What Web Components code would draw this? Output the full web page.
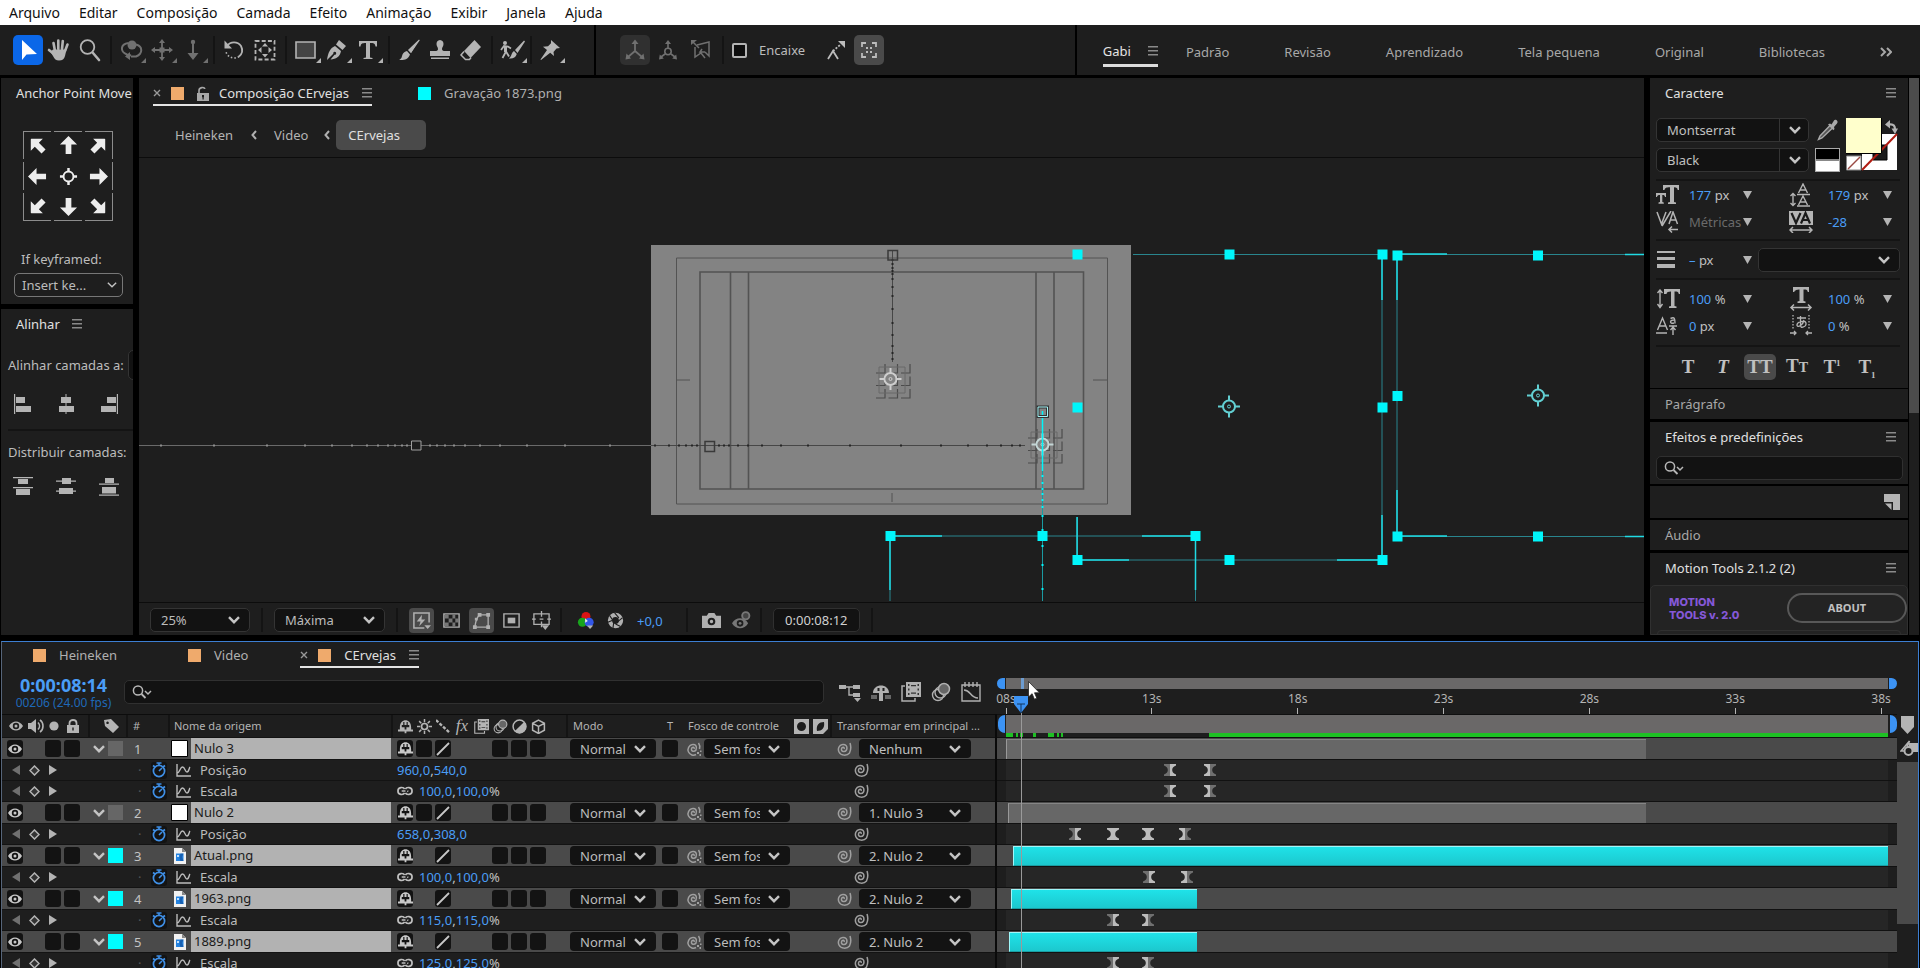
<!DOCTYPE html>
<html lang="pt-BR">
<head>
<meta charset="utf-8">
<title>CErvejas</title>
<style>
  html, body { margin: 0; height: 100%; background: #000; overflow: hidden; }
  body { font: 13px/18px "Noto Sans", "Open Sans", sans-serif; color: #bcbcbc; }
</style>
</head>
<body>
<app-shell></app-shell>
<script>
const BASE = `
  *, *::before, *::after { box-sizing: border-box; }
  :host { display: block; }
  svg { display: block; flex: none; }
  button, select, input { font: inherit; color: inherit; margin: 0; padding: 0; border: 0; background: none; outline: none; }
  a { color: inherit; text-decoration: none; }
`;

const define = (tag, css, html) => customElements.define(tag, class extends HTMLElement {
  connectedCallback() {
    if (this.shadowRoot) return;
    const t = document.createElement('template');
    t.innerHTML = `<style>${BASE}${css}</style>${typeof html === 'function' ? html(this) : html}`;
    this.attachShadow({ mode: 'open' }).append(t.content.cloneNode(true));
  }
});

/* ---------- icons: [viewBox, markup] ---------- */
const F = 'fill="currentColor"';
const S = (w = 1.5) => `fill="none" stroke="currentColor" stroke-width="${w}"`;
const CORNER = `<path ${F} d="M30 23v5h-5z"/>`;
const ICONS = {
  menu: ['0 0 10 10', `<path ${F} d="M0 0h10v1.5H0zM0 4h10v1.5H0zM0 8h10v1.5H0z"/>`],
  chevron: ['0 0 12 8', `<path ${S(2.4)} d="M1 1.2l5 5 5-5"/>`],
  thin: ['0 0 12 8', `<path ${S(1.6)} d="M1 1.2l5 5 5-5"/>`],
  back: ['0 0 6 10', `<path ${S(2)} d="M5 1L1.5 5 5 9"/>`],
  more: ['0 0 12 10', `<path ${S(2)} d="M1 1l4 4-4 4M7 1l4 4-4 4"/>`],
  close: ['0 0 8 8', `<path ${S(1.4)} d="M1 1l6 6M7 1L1 7"/>`],
  lock: ['0 0 12 15', `<path ${S(1.6)} d="M2 7V4.500C2 1 7.500.8 7.800 3"/><path ${F} fill-rule="evenodd" d="M0 7h12v8H0zM5 9v2l.5.6V13.500h1.200v-1.900L7 11V9z"/>`],
  search: ['0 0 20 14', `<circle ${S()} cx="6" cy="5.500" r="4.600"/><path ${S(1.8)} d="M9.500 9l4 4"/><path ${S()} d="M13 6l3 3 3-3"/>`],
  tri: ['0 0 9 8', `<path ${F} d="M0 0h9L4.500 8z"/>`],
  arrowSel: ['0 0 30 30', `<path fill="#fff" d="M9 5v20l4.500-5.500L24 19z"/>`],
  hand: ['0 0 30 30', `<g ${S(2.6)} stroke-linecap="round"><path d="M11 16L9.500 8M14.300 14V5.500M18 14l.8-8M21 16l2.500-6.500M10 19l-5-4"/></g><path ${F} d="M9 14.500h13.500L21 21c-.8 3-2.500 4.500-6 4.500-3 0-4.500-1.500-6-4.500L6.500 17z"/>`],
  zoom: ['0 0 30 30', `<circle ${S(1.8)} cx="12.500" cy="12" r="6.800"/><path ${S(2.6)} stroke-linecap="round" d="M18 18l6 7"/>`],
  orbit: ['0 0 30 30', `<circle ${F} cx="16" cy="10" r="4.500"/><path ${S(2)} d="M12.500 8C4 9 4 17 11 19.500l4 1M20 9.500c7 2 7 9 0 12h-5"/><path ${F} d="M14 17v8l-5-3.500zM30 23v5h-5z"/>`],
  pan: ['0 0 30 30', `<path ${S(1.8)} d="M15 7v16M7 15h16"/><path ${F} d="M15 4l3 4h-6zM15 26l3-4h-6zM4 15l4-3v6zM26 15l-4-3v6zM30 23v5h-5z"/><path ${F} d="M12.500 12.500h5v5h-5z"/>`],
  dolly: ['0 0 30 30', `<path ${S(2)} d="M15 7v12"/><circle ${F} cx="15" cy="7" r="2.200"/><path ${F} d="M9.500 18h11L15 25zM30 23v5h-5z"/>`],
  rotate: ['0 0 30 30', `<path ${S(1.8)} d="M8 11a8.500 8.500 0 0 1 14 0c2 4 1 8-2 10.500"/><path ${S(1.6)} stroke-dasharray="1.500 2" d="M20 21.500A8.500 8.500 0 0 1 7 17"/><path ${F} d="M5.500 5.500V13.500H13z"/>`],
  anchor: ['0 0 30 30', `<path ${S(1.8)} stroke-dasharray="4 2.200" d="M5.500 6h19v18.500h-19z"/><path ${F} d="M15 8l3 3.500h-6zM15 22.500l3-3.500h-6zM8 15l3.500-3v6zM22 15l-3.500-3v6z"/>`],
  rect: ['0 0 30 30', `<path fill="#444" stroke="currentColor" stroke-width="1.600" d="M5 7h19v16H5z"/>${CORNER}`],
  pen: ['0 0 30 30', `<path ${F} fill-rule="evenodd" d="M5 25c1-7 3-12 8-14l6 5c-1 6-5 8-10.500 8.500l4-4.800a1.500 1.500 0 1 0-1.200-1zM14 9.500l3-4.500 7 6-3.500 4z"/>${CORNER}`],
  type: ['0 0 30 30', `<path ${F} d="M6 6h18v5.500h-1.500C22 8.500 21 8 17 8v14.500l2.500.6V24h-9v-.9l2.500-.6V8c-4 0-5 .5-5.500 3.500H6z"/>${CORNER}`],
  brush: ['0 0 30 30', `<path ${F} d="M25 5L14.500 15l2.500 3zM13 16l3 3.500c-2 5-6 6-11 5.500 3-1.500 2.500-3 3.500-5.500.8-2 2.500-3 4.500-3.500z"/><path ${F} d="M25 4.500l.8.8L17 18l-3-3z"/>`],
  stamp: ['0 0 30 30', `<path ${F} d="M15 5a4 4 0 0 1 3.500 4c0 2.500-1.500 3-1.500 5 0 1.500 1 2 3 2h5v5H5v-5h5c2 0 3-.5 3-2 0-2-1.500-2.500-1.500-5A4 4 0 0 1 15 5zM6 22.500h18V24H6z"/>`],
  eraser: ['0 0 30 30', `<path ${F} d="M18.500 5L25 12 14.500 23 8 16z"/><path ${S()} d="M8 16.500L5 20l4.500 4.500h4L15 22.500"/>`],
  puppetBrush: ['0 0 30 30', `<circle ${F} cx="8" cy="8" r="2"/><path ${S(1.800)} d="M4 15l3-4 4 .5 3 2M9 11.500v5L5.500 23M9 16.500l3 5"/><path ${F} d="M10 11H7v6h3zM27 5.500l1 1L20.500 18l-2.500-3zM17 16l2.800 3c-1.500 4-4 5-8 4.500 3-2 2.500-6 5.200-7.500z"/>${CORNER}`],
  pin: ['0 0 30 30', `<path ${F} d="M16 5l9 8-3.500.5-3 3.500.5 4-3.800-3.200L6 25l-.5-.5 6.500-9.500L8 11.800l5-.5 3-3z"/>${CORNER}`],
  axis1: ['0 0 30 30', `<path ${S(1.800)} d="M15 8v8l-7 6M15 16l7 6"/><path ${F} d="M15 4.500l3.500 4.500h-7zM5.500 24.500l1-6 4.500 5zM24.500 24.500l-1-6-4.500 5z"/>`],
  axis2: ['0 0 30 30', `<path ${S(1.600)} d="M15 8v5M12 19l-4 3M18 19l4 3"/><circle ${S(1.600)} cx="15" cy="16.500" r="3.200"/><path ${F} d="M15 5l3 4h-6zM6 24.500l.8-5 4 4zM24 24.500l-.8-5-4 4z"/>`],
  axis3: ['0 0 30 30', `<path ${S(1.500)} d="M11 10l12-3v14l-4-4M9 12v10l6-4 4 5M19 17h-5l2-3"/><path ${F} d="M5 5h6l-6 5z"/><path ${S()} d="M7 7l6 6"/>`],
  snap1: ['0 0 30 30', `<path ${S(1.800)} d="M7 24l5-8 5 8"/><path ${S(1.800)} stroke-dasharray="2 1.500" d="M12 16l7-6"/><path ${F} d="M17 6h7v7z"/>`],
  snap2: ['0 0 30 30', `<path ${S(1.800)} d="M8 12V8h4M18 8h4v4M22 18v4h-4M12 22H8v-4"/><path ${F} d="M12 12h2v2h-2zM16 12h2v2h-2zM12 16h2v2h-2zM16 16h2v2h-2z"/>`],
  arrow: ['0 0 20 20', `<path fill="#ededed" d="M10 0l9 9h-6v10H7V9H1z"/>`],
  target: ['0 0 20 20', `<circle fill="none" stroke="#ededed" stroke-width="2" cx="10" cy="10" r="5.200"/><path stroke="#ededed" stroke-width="2.600" d="M10 1v4M10 15v4M1 10h4M15 10h4"/>`],
  alL: ['0 0 20 20', `<path ${F} d="M1 0h1.200v20H1zM3 3h9v6H3zM3 12h15v6H3z"/>`],
  alC: ['0 0 20 20', `<path ${F} d="M9.500 0h1v20h-1zM5 3h10v6H5zM3 12h15v6H3z"/>`],
  alR: ['0 0 20 20', `<path ${F} d="M17.800 0H19v20h-1.200zM8 3h9v6H8zM2 12h15v6H2z"/>`],
  diT: ['0 0 20 20', `<path ${F} d="M0 1h20v1.200H0zM5 3h10v5H5zM0 11h20v1.200H0zM3 13h14v6H3z"/>`],
  diC: ['0 0 20 20', `<path ${F} d="M0 4.500h20v1.200H0zM6 2h9v6H6zM0 14.500h20v1.200H0zM3 12h14v6H3z"/>`],
  diB: ['0 0 20 20', `<path ${F} d="M0 7.500h20v1.200H0zM6 2h9v5H6zM0 18.500h20v1.200H0zM3 11h14v6.500H3z"/>`],
  fast: ['0 0 20 20', `<path ${S(1.600)} d="M18 12V2H2v16h11"/><path ${F} d="M10.500 4L5 11h4l-1.500 5L14 9h-4zM13 15h7l-3.500 4z"/>`],
  checker: ['0 0 20 20', `<path ${S(1.500)} d="M2 3h16v14H2z"/><path ${F} d="M3 4h4v4H3zM11 4h3v4h-3zM7 8h4v4H7zM14 8h3v4h-3zM3 12h4v4H3zM11 12h3v4h-3z" opacity=".6"/>`],
  mask: ['0 0 20 20', `<path ${S(1.400)} d="M3 17C4 11 4 8 8 4h9v13z"/><path ${F} d="M1 15h4v4H1zM15 15h4v4h-4zM15 2h4v4h-4zM6 2h4v4H6zM3 7h3v3H3z"/>`],
  region: ['0 0 20 20', `<path ${S(1.500)} d="M2 3h16v14H2z"/><path ${F} d="M6 7h8v6H6z"/>`],
  guides: ['0 0 20 20', `<path ${S(1.400)} d="M2 3h16v11H2zM10 0v6M10 11v6M0 8.500h4M16 8.500h4M8 8.500h4"/><path ${F} d="M10 15h8l-4 5z"/>`],
  rgb: ['0 0 20 20', `<circle cx="10" cy="6" r="5" fill="#d91414"/><circle cx="6" cy="12.500" r="5" fill="#18a51d"/><circle cx="13.500" cy="12.500" r="5" fill="#3256e8"/><path fill="#e9e9e9" d="M9 8l3 3-3 2z"/><path ${F} d="M11 16h7l-3.500 4z"/>`],
  aperture: ['0 0 20 20', `<circle ${S(5)} cx="10" cy="10" r="6.500"/><path stroke="#1e1e1e" stroke-width="1.300" d="M9 1l5 6M18 7l-6 5M16 17l-6-3M7 19l1-7M1 12l7-3M3 4l4 6"/>`],
  camera: ['0 0 20 20', `<path ${F} fill-rule="evenodd" d="M0 5h5l2-3h6l2 3h5v13H0zM10 7a4 4 0 1 0 0 8 4 4 0 0 0 0-8zm0 2.200a1.800 1.800 0 1 1 0 3.600 1.800 1.800 0 0 1 0-3.600z"/>`],
  snapEye: ['0 0 20 20', `<path ${F} fill-rule="evenodd" d="M0 13c4-7 13-7 17 0-4 7-13 7-17 0zm8.500-3.500a3.500 3.500 0 1 0 0 7 3.500 3.500 0 0 0 0-7z"/><circle ${F} cx="8.500" cy="13" r="1.500"/><circle fill="#444" stroke="currentColor" stroke-width="2" cx="14.500" cy="5" r="3.800"/>`],
  dropper: ['0 0 22 22', `<path fill="#555" stroke="currentColor" stroke-width="1.400" d="M13 6.500L3 17l-1.500 3.500L5 19 15.500 9z"/><path ${F} d="M11 5.500l2-1 1.500 1L17 1.500c1.500-2 5 1 3 3L17 8l.5 2-1.200 1.200z"/>`],
  swap: ['0 0 13 14', `<path ${S(2.200)} d="M4 4.500c5-1 6 2 6 5"/><path ${F} d="M0 4.500L5 0v8.500zM6.500 8.500h6.500L10 14z"/>`],
  note: ['0 0 16 16', `<path ${F} fill-rule="evenodd" d="M0 0h16v16H9V8H0z"/><path ${F} d="M1 9.500h6.500V16z"/>`],
  flow: ['0 0 22 20', `<path ${F} d="M0 3h7v4H0zM14 3h7v4h-7zM14 11h7v4h-7zM15 16h7l-3.500 4z"/><path ${S(1.400)} d="M6 5h9M10 5v8h5"/>`],
  shy: ['0 0 20 20', `<path ${F} fill-rule="evenodd" d="M2.500 11C2.500-1.500 17.500-1.500 17.500 11v3H20v2.500h-8.800V19H8.800v-2.500H0V14h2.500zM7 4v4H5v3h3.800v3h2.400v-3H15V8h-2V4h-1.600v4H8.600V4z"/>`],
  shyBig: ['0 0 20 20', `<path ${F} d="M2 11c0-10 16-10 16 0h-6v8H8v-8z"/><path fill="#1e1e1e" d="M6.500 6h2v3h-2zM11.500 6h2v3h-2z"/><path ${F} opacity=".5" d="M0 13h6v4H0zM14 13h6v4h-6z"/>`],
  frames: ['0 0 20 20', `<path ${S(1.500)} d="M4 4H1v15h13v-3"/><path ${F} d="M5 0h15v15H5z"/><path fill="#333" d="M7 2h1.500v2H7zM7 6.500h1.500v2H7zM7 11h1.500v2H7zM16.500 2H18v2h-1.500zM16.500 6.500H18v2h-1.500zM16.500 11H18v2h-1.500zM10 3h5v1.200h-5zM10 10.500h5v1.200h-5z"/>`],
  blur: ['0 0 20 20', `<circle ${S(1.400)} cx="7" cy="13" r="5.500"/><circle ${S(1.400)} cx="9.500" cy="10.500" r="5.500"/><circle cx="13" cy="7" r="5.500" fill="#666" stroke="currentColor" stroke-width="1.500"/>`],
  graph: ['0 0 20 20', `<path ${S(1.400)} d="M1 3h18v16H1zM4 0v5M8 0v5M12 0v5M16 0v5"/><path ${S(1.500)} d="M3 8c7 0 6 8 14 8"/>`],
  eye: ['0 0 14 12', `<path ${F} fill-rule="evenodd" d="M0 6c3.500-6 10.500-6 14 0-3.500 6-10.500 6-14 0zm7-3.200a3.200 3.200 0 1 0 0 6.400 3.200 3.200 0 0 0 0-6.400z"/><circle ${F} cx="7" cy="6" r="1.500"/>`],
  sound: ['0 0 16 14', `<path ${F} d="M0 4h3l5-4v14l-5-4H0z"/><path ${S(1.600)} d="M10 3.500c2 2 2 5 0 7M12 .8c4 3 4 9.500 0 12.400"/>`],
  dot: ['0 0 10 10', `<circle ${F} cx="5" cy="5" r="4.600"/>`],
  locked: ['0 0 12 14', `<path ${S(1.800)} d="M2.500 7V4c0-4 7-4 7 0v3"/><path ${F} fill-rule="evenodd" d="M0 6h12v8H0zM5.300 8.500v3h1.400v-3z"/>`],
  tag: ['0 0 16 14', `<path ${F} fill-rule="evenodd" d="M1 1l7-1 8 8-6 6-8-7zm3.500 1.500a1.300 1.300 0 1 0 .1 0z"/>`],
  sun: ['0 0 14 14', `<circle ${S(1.600)} cx="7" cy="7" r="2.800"/><path ${S(1.400)} d="M7 0v3M7 11v3M0 7h3M11 7h3M2 2l2 2M10 10l2 2M12 2l-2 2M4 10l-2 2"/>`],
  dashes: ['0 0 14 14', `<path ${S(2.200)} stroke-dasharray="3 1.500" d="M0 1l13 12"/>`],
  slash: ['0 0 14 14', `<path ${S(1.800)} d="M1 13L13 1"/>`],
  half: ['0 0 14 14', `<circle ${S(1.400)} cx="7" cy="7" r="6"/><path ${F} d="M11.500 2.500A6.200 6.200 0 0 1 2.500 11.500z"/>`],
  cube: ['0 0 14 14', `<path ${S(1.400)} d="M7 1l5.500 3v6.500L7 13.500l-5.500-3V4zM1.500 4L7 7l5.500-3M7 7v6"/>`],
  matte1: ['0 0 15 15', `<path ${F} fill-rule="evenodd" d="M0 0h15v15H0zM7.500 3a4.500 4.500 0 1 0 0 9 4.500 4.500 0 0 0 0-9z"/>`],
  matte2: ['0 0 15 15', `<path ${F} fill-rule="evenodd" d="M0 0h15v10L10 15H0zM11 3C6 3 3 6 4 12c5 0 8-3 7-9z"/><path ${F} d="M4 12l6-7"/>`],
  spiral: ['0 0 16 16', `<path ${S(1.500)} d="M8 8c1-2-2-2.500-2.500 0C5 11 9 11.500 10.500 9 12 5 9 3 6.500 3.500 3 4 1.500 8 3 11c2 4 8 4 10.500 1C15 9 15 5 14 2"/>`],
  spiralM: ['0 0 16 16', `<path ${S(1.500)} d="M8 8c1-2-2-2.500-2.500 0C5 10.500 8.500 11 10 9 11.500 5 9 3 6.500 3.500 3 4 1 8 2.500 11c1.500 3 5 4 7.500 2.500M12.500 2c1.500 2 1.500 4 1 6"/><path ${F} d="M11 11h2v2h-2zM13.500 13H15v2h-1.500zM14 9.500h1.500V11H14z"/>`],
  solid: ['0 0 17 17', `<path fill="#fff" stroke="#000" stroke-width="1" d="M.5.5h16v16H.5z"/>`],
  png: ['0 0 17 17', `<path fill="#f2f2f2" d="M3 1h8l4 4v12H3z"/><path fill="#888" d="M11 1l4 4h-4z"/><path fill="#2583e0" d="M5 6.500h7.500V14H5z"/><path fill="#0b3f85" d="M9.500 6.500h3L11 10l1.500 4H9.500l-1-3z" opacity=".5"/><path fill="#bfe0ff" d="M6 8h2v2H6z"/>`],
  prev: ['0 0 8 10', `<path ${F} d="M8 0v10L0 5z"/>`],
  next: ['0 0 8 10', `<path ${F} d="M0 0v10l8-5z"/>`],
  key: ['0 0 11 11', `<path fill="#333" stroke="currentColor" stroke-width="1.500" d="M5.500 1L10 5.500 5.500 10 1 5.500z"/>`],
  watch: ['0 0 16 16', `<circle fill="none" stroke="#3f8fe6" stroke-width="1.700" cx="8" cy="9" r="5.600"/><path fill="none" stroke="#3f8fe6" stroke-width="1.600" d="M8 9l3-3M5.500 1h5M8 1v2.500M2 3.500l2 1.500M14 3.500l-2 1.500"/>`],
  curve: ['0 0 15 13', `<path ${S(1.400)} d="M1 0v12h14M1 9c3 0 3-6 5.500-6S9 8 11 8s2-4 3-5"/>`],
  link: ['0 0 17 10', `<path ${S(1.800)} d="M8 3C7 .5 1 .5 1 5s6 4.500 7 2M9 7c1 2.500 7 2.500 7-2S10 .5 9 3M5 5h4M11 5l1 .5"/>`],
  bin: ['0 0 15 18', `<path ${F} d="M1 0h13v11l-6.500 7L1 11z"/>`],
  compBtn: ['0 0 18 18', `<path ${F} d="M9 4h9v9H9z"/><path ${S(1.600)} d="M9.500 2L1 12h6.500V7z"/><circle cx="8.500" cy="12" r="4" fill="#1e1e1e" stroke="currentColor" stroke-width="2"/>`],
};
const icon = (name, w, h = w) => `<svg width="${w}" height="${h}" viewBox="${ICONS[name][0]}" aria-hidden="true">${ICONS[name][1]}</svg>`;

/* ---------- shared controls ---------- */
define('ui-select', `
  :host { display: flex; position: relative; align-items: center; height: 24px; }
  select { appearance: none; width: 100%; height: 100%; padding: 0 30px 0 10px; background: #121212;
    border: 1px solid #343434; border-radius: 5px; line-height: 18px; text-overflow: clip; }
  svg { position: absolute; right: 10px; pointer-events: none; color: #c4c4c4; }
  :host([split]) select { padding-right: 36px; background: linear-gradient(90deg, #121212 calc(100% - 29px), #343434 0 calc(100% - 28px), #121212 0); }
  :host([split]) svg { right: 8px; }
  :host([row]) { height: 19px; }
  :host([row]) select { border: 0; background: #131313; border-radius: 4px; }
  :host([outlined]) select { background: #1e1e1e; border-color: #777; padding: 0 24px 0 7px; }
  :host([outlined]) svg { right: 6px; }
`, el => `<select aria-label="${el.getAttribute('label')}"><option>${el.getAttribute('value') || ''}</option></select>${icon(el.hasAttribute('outlined') ? 'thin' : 'chevron', el.hasAttribute('outlined') ? 10 : 12, 8)}`);

define('search-field', `
  :host { display: flex; position: relative; align-items: center; height: 24px; }
  input { width: 100%; height: 100%; padding: 0 8px 0 34px; background: #121212; border: 1px solid #303030; border-radius: 5px; }
  svg { position: absolute; left: 8px; color: #b8b8b8; }
`, el => `<input type="text" aria-label="${el.getAttribute('label')}">${icon('search', 20, 14)}`);

define('panel-title', `
  :host { display: flex; align-items: center; height: 32px; padding: 0 12px 2px 15px; color: #e0e0e0; white-space: nowrap; overflow: hidden; }
  :host([spread]) { justify-content: space-between; }
  h2 { margin: 0; font: inherit; }
  button { margin-left: 12px; color: #8a8a8a; }
  :host([dim]) { color: #a8a8a8; padding-bottom: 0; }
`, el => `<h2><slot></slot></h2>${el.hasAttribute('menu') ? `<button aria-label="Menu do painel">${icon('menu', 10)}</button>` : ''}`);

define('comp-tab', `
  :host { display: flex; align-items: center; height: 100%; color: #b0b0b0; }
  .tab { display: flex; align-items: center; height: 24px; border-bottom: 2px solid transparent; }
  :host([active]) .tab { border-color: #e4e4e4; color: #e0e0e0; }
  .close { margin-right: 10px; color: #999; }
  i { width: 13px; height: 13px; background: var(--swatch, #efaa6c); margin-right: 13px; flex: none; }
  .lock { margin-right: 10px; color: #a8a8a8; }
  .menu { margin-left: 13px; color: #8a8a8a; }
`, el => `<div class="tab">
  ${el.hasAttribute('active') ? `<button class="close" aria-label="Fechar">${icon('close', 8)}</button>` : ''}
  <i></i>${el.hasAttribute('lock') ? `<button class="lock" aria-label="Bloquear">${icon('lock', 12, 15)}</button>` : ''}
  <button><slot></slot></button>
  ${el.hasAttribute('active') ? `<button class="menu" aria-label="Menu">${icon('menu', 10)}</button>` : ''}</div>`);

/* ---------- menu bar and toolbar ---------- */
define('menu-bar', `
  :host { background: #fff; color: #111; height: 25px; }
  nav { display: flex; gap: 19px; padding-left: 9px; height: 25px; font-size: 14px; line-height: 25px; }
`, `<nav>${['Arquivo', 'Editar', 'Composição', 'Camada', 'Efeito', 'Animação', 'Exibir', 'Janela', 'Ajuda'].map(t => `<a href="#">${t}</a>`).join('')}</nav>`);

const TOOLS = ['arrowSel', 'hand', 'zoom', '|', '-orbit', '-pan', '-dolly', '|', 'rotate', 'anchor', '|', 'rect', 'pen', 'type', '|', 'brush', 'stamp', 'eraser', '|', 'puppetBrush', '|', 'pin'];
define('tool-bar', `
  :host { display: flex; height: 50px; background: #000; gap: 2px; margin-bottom: 3px; }
  div { display: flex; align-items: center; background: #1e1e1e; }
  .tools { gap: 1px; padding-left: 13px; flex: 0 0 594px; color: #b4b4b4; }
  .snap { flex: 1; padding-left: 24px; gap: 3px; }
  button.t { width: 30px; height: 30px; border-radius: 5px; color: inherit; }
  button.t svg { width: 30px; height: 30px; }
  .dim { color: #707070 !important; }
  .on { background: #0b67e8; }
  .lit { background: #4a4a4a; }
  .faint { background: #303030; }
  hr { width: 2px; height: 28px; margin: 0 3px; border: 0; background: #141414; }
  .tools hr { margin: 0 3px 0 4px; }
  .tools hr:last-of-type { margin: 0 2px; }
  label { display: flex; align-items: center; gap: 12px; margin: 0 13px 0 2px; }
  input { appearance: none; width: 15px; height: 15px; border: 2px solid #b4b4b4; border-radius: 2px; background: #0e0e0e; }
`, `<div class="tools">${TOOLS.map(t => t === '|' ? '<hr>' : `<button class="t ${t === 'arrowSel' ? 'on' : t[0] === '-' ? 'dim' : ''}" aria-label="${t.replace('-', '')}">${icon(t.replace('-', ''), 30)}</button>`).join('')}</div>
<div class="snap"><button class="t dim faint" aria-label="Eixo local">${icon('axis1', 30)}</button><button class="t dim" aria-label="Eixo do mundo">${icon('axis2', 30)}</button><button class="t dim" aria-label="Eixo da exibição">${icon('axis3', 30)}</button><hr>
<label><input type="checkbox">Encaixe</label><button class="t" aria-label="Encaixar bordas">${icon('snap1', 30)}</button><button class="t lit" aria-label="Encaixar pontos">${icon('snap2', 30)}</button></div>
<work-spaces></work-spaces>`);

define('work-spaces', `
  :host { display: block; background: #1e1e1e; padding: 0 28px 0 26px; }
  nav { display: flex; align-items: center; gap: 55px; height: 54px; color: #a8a8a8; }
  .cur { display: flex; align-items: center; gap: 17px; height: 30px; color: #e4e4e4; border-bottom: 3px solid #dcdcdc; margin-right: -27px; }
  .cur button { color: #8a8a8a; }
`, `<nav><span class="cur"><a href="#">Gabi</a><button aria-label="Menu">${icon('menu', 10)}</button></span>
${['Padrão', 'Revisão', 'Aprendizado', 'Tela pequena', 'Original', 'Bibliotecas'].map(t => `<a href="#">${t}</a>`).join('')}<button aria-label="Mais">${icon('more', 12, 10)}</button></nav>`);

/* ---------- left column ---------- */
const ARROWS = [-45, 0, 45, -90, null, 90, -135, 180, 135];
define('anchor-panel', `
  :host { background: #1e1e1e; height: 226px; overflow: hidden; }
  .grid { display: grid; grid-template-columns: repeat(3, 28px); gap: 3px; width: 91px; margin: 21px 0 0 22px; }
  .grid button { display: grid; place-items: center; height: 28px; border: 0 solid #8c8c8c; }
  .grid button:nth-child(-n+3) { border-top-width: 1px; }
  .grid button:nth-child(n+7) { border-bottom-width: 1px; }
  .grid button:nth-child(3n+1) { border-left-width: 1px; }
  .grid button:nth-child(3n) { border-right-width: 1px; }
  label { display: block; margin: 29px 0 5px 20px; }
  ui-select { margin: 0 10px 0 13px; }
`, `<panel-title>Anchor Point Move</panel-title>
<div class="grid">${ARROWS.map(a => a === null ? `<button aria-label="Centro">${icon('target', 19)}</button>` : `<button aria-label="Mover ${a}°"><span style="rotate:${a}deg">${icon('arrow', 19)}</span></button>`).join('')}</div>
<label>If keyframed:</label><ui-select outlined label="If keyframed" value="Insert ke..."></ui-select>`);

define('align-panel', `
  :host { background: #1e1e1e; overflow: hidden; flex: 1; }
  .to { display: flex; align-items: center; height: 30px; margin: 9px 0 14px 7px; white-space: nowrap; gap: 4px; }
  .to ui-select { flex: 0 0 90px; height: 30px; }
  .row { display: flex; gap: 23px; padding-left: 12px; color: #b4b4b4; }
  hr { border: 0; height: 2px; background: #141414; margin: 15px 0 12px 7px; }
  p { margin: 0 0 15px 7px; white-space: nowrap; }
`, `<panel-title menu>Alinhar</panel-title>
<div class="to"><span>Alinhar camadas a:</span><ui-select label="Alinhar camadas a" value=""></ui-select></div>
<div class="row">${['alL', 'alC', 'alR'].map(n => `<button aria-label="${n}">${icon(n, 20)}</button>`).join('')}</div><hr>
<p>Distribuir camadas:</p>
<div class="row">${['diT', 'diC', 'diB'].map(n => `<button aria-label="${n}">${icon(n, 20)}</button>`).join('')}</div>`);

/* ---------- composition viewer ---------- */
const C = '#00f6fb';
const sq = (x, y) => `<path fill="${C}" d="M${x - 5} ${y - 5}h10v10h-10z"/>`;
const dim = d => `<path d="${d}" fill="none" stroke="#29858e"/>`;
const lit = (d, w = 1.5) => `<path d="${d}" fill="none" stroke="#20dbe4" stroke-width="${w}"/>`;
const aim = (x, y, c) => `<g fill="none" stroke="${c}" stroke-width="2"><circle cx="${x}" cy="${y}" r="6"/><path d="M${x} ${y - 11}v5M${x} ${y + 6}v5M${x - 11} ${y}h5M${x + 6} ${y}h5"/><circle cx="${x}" cy="${y}" r="1.500" stroke-width="1"/></g>`;
const nul = (x, y) => { let d = ''; for (let i = 0; i < 3; i++) for (let j = 0; j < 3; j++) d += `M${x - 7 + i * 12.5} ${y - 16 + j * 12.5}v9h-9`; return `<path d="${d}" fill="none" stroke="#4c4c4c" stroke-width="1.200"/><path d="M${x - 13} ${y - 13}h26v26h-26z" fill="none" stroke="#686868"/>`; };
const dot = (x, y, c) => `<path fill="${c}" d="M${x - 1} ${y - 1}h2v2h-2z"/>`;
const hdots = (xs, y, c) => xs.map(x => dot(x, y, c)).join('');
const vdots = (x, ys, c) => ys.map(y => dot(x, y, c)).join('');
define('comp-view', `
  :host { display: grid; grid-template-rows: minmax(0, 1fr); flex: 1 1 0; min-height: 0; overflow: hidden; }
  svg { width: 100%; height: 100%; min-height: 0; }
`, `<svg viewBox="139 158 1505 444" preserveAspectRatio="xMidYMid slice" role="img" aria-label="Composição CErvejas">
<path fill="#838383" d="M651 245h480v270H651z"/>
<g fill="none" stroke="#535353"><path d="M676.500 258h431v246h-431zM676 380h14M1093 380h14M892 493v9"/><path stroke-width="1.600" d="M700 272h383.500v217H700zM730.500 272v217M748.500 272v217M1036 272v217M1054 272v217"/></g>
<path d="M139 445.500h512" stroke="#6a6a6a"/>
${hdots([161, 214, 267, 305, 332, 352, 367, 378, 388, 395, 402, 407, 430, 437, 445, 454, 465, 480, 500, 527, 565, 610], 445.5, '#8e8e8e')}
<path d="M651 445.500h374M892.500 250v112" stroke="#474747"/>
${hdots([655, 669, 679, 686, 692, 697, 719, 724, 729, 738, 748, 762, 781, 808, 850, 901, 941, 968, 987, 1001, 1012, 1020], 445.5, '#262626')}
${vdots(892.5, [260, 264, 268, 271, 274, 279, 287, 296, 309, 323, 335, 346, 353, 359], '#262626')}
<path d="M411.500 441h9.500v9h-9.500z" fill="#1e1e1e" stroke="#a0a0a0"/><path d="M705 441.500h9.500v10H705zM888 250.500h9.500v9.500H888z" fill="none" stroke="#3a3a3a" stroke-width="1.500"/>
${nul(892, 380)}${aim(890.500, 379, '#cecece')}${nul(1044, 445)}${aim(1042.500, 444.500, '#c4d6d6')}
${dim('M1133 254.500H1382V560H1077.500V517M1397 536.500V254.500H1644M1397 536.500H1644M890 601V536H1195.500V601')}
${lit('M1077 517v43h52M1382 300V254M1382 515v45h-45M1397 300v-46h50M1397 490v46h50M1625 254.500h19M1625 536.500h19M890 590v-54h52M1142 536h53.500v54')}
<path d="M1042.500 411v190" stroke="#1b9aa1"/><path d="M1042.500 411v60" stroke="${C}" stroke-width="1.500"/>
${vdots(1042.5, [476, 483, 489, 494, 500, 507, 516, 530, 546, 565, 589], C)}
<path d="M1038 407h9.500v9.500h-9.500z" fill="none" stroke="#333" stroke-width="3"/><path d="M1038 407h9.500v9.500h-9.500z" fill="none" stroke="#a5f4f6"/>
${[[1077.5, 254.5], [1077.5, 407.5], [890.5, 536], [1042.5, 536], [1195.5, 536], [1077.5, 560], [1229.5, 254.5], [1382.5, 254.5], [1397.5, 255.5], [1538, 255.5], [1382.5, 407.5], [1397.5, 396], [1382.5, 560], [1229.5, 560], [1397.5, 536.5], [1538, 536.5]].map(p => sq(...p)).join('')}
${aim(1229, 406.500, '#62cfd2')}${aim(1538, 395.500, '#62cfd2')}
</svg>`);

define('comp-panel', `
  :host { display: flex; flex-direction: column; background: #1e1e1e; min-width: 0; min-height: 0; }
  .tabs { display: flex; gap: 46px; height: 34px; padding: 0 14px 2px; align-items: center; }
  .crumbs { display: flex; align-items: center; height: 46px; padding: 0 36px; border-bottom: 1px solid #0c0c0c; flex: none; }
  .crumbs a { color: #b4b4b4; }
  .crumbs svg { margin: 0 17px 0 18px; color: #b0b0b0; }
  .crumbs svg.last { margin: 0 6px 0 16px; }
  .crumbs .cur { padding: 0 26px 0 12px; line-height: 30px; background: #4a4a4a; border-radius: 5px; color: #e0e0e0; }
  .foot { display: flex; align-items: center; height: 33px; border-top: 1px solid #0c0c0c; padding: 2px 0 0 11px; flex: none; }
  hr { width: 2px; height: 24px; border: 0; background: #141414; margin: 0 11px; }
  .b { display: grid; place-items: center; width: 25px; height: 25px; border-radius: 4px; margin-right: 5px; color: #b0b0b0; }
  .on { background: #4a4a4a; }
  .z { width: 100px; } .q { width: 111px; }
  .blue { color: #4a9df6; margin: 2px 12px 0 4px; }
  .time { width: 87px; height: 24px; line-height: 22px; background: #121212; border: 1px solid #303030; border-radius: 5px; color: #d0d0d0; }
  .tight { margin-left: 1px; }
`, `<div class="tabs"><comp-tab active lock>Composição CErvejas</comp-tab><comp-tab style="--swatch:#00fdff">Gravação 1873.png</comp-tab></div>
<nav class="crumbs"><a href="#">Heineken</a>${icon('back', 6, 10)}<a href="#">Video</a>${icon('back', 6, 10).replace('<svg', '<svg class="last"')}<a href="#" class="cur">CErvejas</a></nav>
<comp-view></comp-view>
<div class="foot"><ui-select class="z" label="Ampliação" value="25%"></ui-select><hr><ui-select class="q" label="Resolução" value="Máxima"></ui-select><hr>
${['fast', 'checker', 'mask', 'region', 'guides'].map((n, i) => `<button class="b ${i % 2 || i > 3 ? '' : 'on'}" aria-label="${n}">${icon(n, 19)}</button>`).join('')}<hr class="tight">
<button class="b" aria-label="Canais">${icon('rgb', 18)}</button><button class="b" aria-label="Exposição">${icon('aperture', 17)}</button><button class="blue">+0,0</button><hr>
<button class="b" aria-label="Instantâneo">${icon('camera', 19)}</button><button class="b" style="color:#777" aria-label="Mostrar instantâneo">${icon('snapEye', 19)}</button><hr class="tight">
<button class="time">0:00:08:12</button><hr></div>`);

/* ---------- right column ---------- */
const glyph = {
  size: `<svg width="24" height="22" viewBox="0 0 24 22"><g ${F}><path d="M7 1h16v5h-1.300c-.3-2-.8-2.800-3.700-2.800V18l2 .5V20h-8v-1.500l2-.5V3.200C10 3.200 9 4 8.500 6H7z"/><path d="M0 9h10v4H9c-.2-1.500-.7-2-2.700-2v7l1.500.4v1.400H2.500v-1.400L4 18v-7c-2 0-2.700.5-3 2H0z"/></g></svg>`,
  lead: `<svg width="24" height="24" viewBox="0 0 24 24"><g ${S(1.400)}><path d="M4 11v11M1.500 13L4 10.500 6.500 13M1.500 20L4 22.500 6.500 20M8 11.500h13M8 23h13M9.500 10L14 1l4.500 9M11 7h6M9.500 22l4.500-9 4.500 9M11 19h6"/></g></svg>`,
  kern: `<svg width="24" height="22" viewBox="0 0 24 22"><g ${S(1.500)}><path d="M1 1l4.500 12L10 1M6 15L15 0M13 13l4-12 4.500 12M14.500 9h6M13 18.500h9M16 15.500l-3 3 3 3"/></g></svg>`,
  track: `<svg width="24" height="22" viewBox="0 0 24 22"><path ${F} d="M0 0h24v14H0z"/><path fill="none" stroke="#1a1a1a" stroke-width="2.200" d="M2.500 2L7 12l4.500-10M12 12.500L16.500 2 21 12.500M14 9h5"/><path ${S(1.500)} d="M1 19h22M4 16l-3 3 3 3M20 16l3 3-3 3"/></svg>`,
  stroke: `<svg width="20" height="18" viewBox="0 0 20 18"><path ${F} d="M1 0h18v2H1zM1 6h18v3H1zM1 13h18v4H1z"/></svg>`,
  vscale: `<svg width="24" height="20" viewBox="0 0 24 20"><path ${S(1.400)} d="M4 1v17M1.500 4L4 1l2.500 3M1.500 15L4 18.500 6.500 15"/><path ${F} d="M8 0h16v5h-1.200c-.3-2-1-2.600-4.300-2.600V17l2 .4V19h-7.500v-1.600l2-.4V2.400c-2.800 0-4.200.6-4.500 2.600H8z"/></svg>`,
  hscale: `<svg width="24" height="24" viewBox="0 0 24 24"><path ${F} d="M4 0h16v5h-1.200c-.3-2-1-2.600-4.300-2.600V14l2 .4V16H8.500v-1.600l2-.4V2.400C8.500 2.400 5.500 3 5.200 5H4z"/><path ${S(1.500)} d="M2 20.500h20M5 17.500l-3 3 3 3M19 17.500l3 3-3 3"/></svg>`,
  base: `<svg width="24" height="20" viewBox="0 0 24 20"><g ${S(1.400)}><path d="M1.500 14L6.500 2l5 12M3 10h7M0 17h11M13 10h8M17 19v-7M14.500 14l2.500-3 2.500 3M14.500 2.500c4-2 4.500 0 4.500 5M19 4c-6-.5-5.500 4.500-1 3"/></g></svg>`,
  tsume: `<svg width="24" height="22" viewBox="-1 0 24 22"><g ${S(1.300)}><path stroke-dasharray="1.500 1.500" d="M3 0v14M19 0v14"/><path d="M7 3h9M10.500 1v9c0 2 1 3 3 2M14 5c-1 5-6 8-7 5.500C6.500 7 15 4.500 16 8c.5 3-2 4-3.500 4M0 18h6M4 16l2 2-2 2M22 18h-6M18 16l-2 2 2 2"/></g></svg>`,
};
define('character-panel', `
  :host { background: #1e1e1e; color: #c0c0c0; height: 310px; overflow: hidden; }
  .font { display: grid; grid-template-columns: 1fr 25px 52px; column-gap: 6px; padding: 8px 10px 7px 6px; }
  .fams { display: grid; gap: 6px; }
  .mini { display: grid; gap: 6px; justify-items: center; align-content: start; color: #aaa; }
  .bw { width: 25px; height: 24px; border: 1px solid #aaa; background: linear-gradient(#000 10px, #888 0 12px, #fff 0); }
  .row { display: grid; grid-template-columns: 33px 54px 46px 39px 55px 1fr; align-items: center; height: 27px; margin-left: 6px; white-space: nowrap; }
  .row button { text-align: left; }
  .row svg { color: #b4b4b4; }
  b { font-weight: 400; color: #4a9df6; }
  .off { color: #6a6a6a; }
  hr { border: 0; height: 2px; background: #141414; margin: 0 8px 0 6px; }
  .kern { margin-bottom: 4px; } .scale { margin-top: 5px; } .shift { margin-bottom: 6px; }
  .stroke { grid-template-columns: 33px 54px 15px 1fr; height: 37px; padding-right: 8px; }
  .styles { display: flex; align-items: center; gap: 3px; height: 40px; padding-left: 22px; font: bold 19px/24px "Liberation Serif", serif; }
  .styles button { width: 32px; height: 26px; border-radius: 5px; }
  .styles .on { background: #4a4a4a; margin: 0 2px; }
  .styles small { font-size: 14px; } .styles sup, .styles sub { font-size: 9px; line-height: 0; }
`, `<panel-title menu spread>Caractere</panel-title>
<div class="font"><div class="fams"><ui-select split label="Família de fontes" value="Montserrat"></ui-select><ui-select split label="Estilo da fonte" value="Black"></ui-select></div>
<div class="mini">${icon('dropper', 22, 24)}<button class="bw" aria-label="Preto e branco"></button></div>
<svg width="52" height="54" viewBox="0 0 52 54"><path fill="#fff" d="M16 16h35v36H16z"/><path fill="#1a1a1a" stroke="#000" d="M27 27h14v15H27z"/><path stroke="#b01c12" stroke-width="2" d="M51 16L16 52"/><path fill="#fff" stroke="#888" d="M.5 38h14.500v14H.5z"/><path stroke="#9a4a44" stroke-width="1.500" d="M2 51l12-12"/><path fill="#ffffcc" stroke="#000" d="M-.5-.5h36v36h-36z"/><g transform="translate(39 2)" color="#b4b4b4">${ICONS.swap[1]}</g></svg></div><hr>
<div class="row">${glyph.size}<button><b>177</b> px</button>${icon('tri', 9, 8)}${glyph.lead}<button><b>179</b> px</button>${icon('tri', 9, 8)}</div>
<div class="row kern">${glyph.kern}<button class="off">Métricas</button>${icon('tri', 9, 8)}${glyph.track}<button><b>-28</b></button>${icon('tri', 9, 8)}</div><hr>
<div class="row stroke">${glyph.stroke}<button><b>–</b> px</button>${icon('tri', 9, 8)}<ui-select label="Estilo do traçado"></ui-select></div><hr>
<div class="row scale">${glyph.vscale}<button><b>100</b> %</button>${icon('tri', 9, 8)}${glyph.hscale}<button><b>100</b> %</button>${icon('tri', 9, 8)}</div>
<div class="row shift">${glyph.base}<button><b>0</b> px</button>${icon('tri', 9, 8)}${glyph.tsume}<button><b>0</b> %</button>${icon('tri', 9, 8)}</div><hr>
<div class="styles"><button>T</button><button><em>T</em></button><button class="on">TT</button><button>T<small>T</small></button><button>T<sup>1</sup></button><button>T<sub>1</sub></button></div>`);

define('right-column', `
  :host { display: grid; grid-template-columns: 1fr 10px; grid-template-rows: minmax(0, 1fr); background: #1e1e1e; min-height: 0; }
  .col { display: flex; flex-direction: column; background: #000; min-width: 0; min-height: 0; padding-right: 1px; }
  .col > * { background: #1e1e1e; flex: none; }
  .bar { background: linear-gradient(#4c4c4c 335px, #1e1e1e 0); }
  .par { margin: 1px 0 3px; height: 30px; }
  .fx { padding-bottom: 4px; }
  .fx search-field { margin: 2px 5px 0 6px; }
  .note { display: flex; justify-content: flex-end; align-items: center; height: 32px; margin: 2px 0; padding-right: 8px; color: #b4b4b4; }
  .aud { height: 30px; margin-bottom: 3px; }
  .col .mt { flex: 1 1 0; display: flex; flex-direction: column; min-height: 0; overflow: hidden; }
  .mt panel-title { flex: none; }
  .box { flex: 1 1 0; min-height: 0; background: #232323; border: 1px solid #303030; border-radius: 5px 5px 0 0; overflow: hidden; }
  .in { display: flex; justify-content: space-between; padding: 7px 0 0 18px; }
  strong { padding-top: 3px; font: 800 11px/13px Inter, sans-serif; color: #8558d8; }
  .about { flex: 0 0 120px; height: 30px; border: 2px solid #585858; border-radius: 15px; color: #c0c0c0; font-size: 11px; font-weight: 700; }
  .next { height: 20px; margin: 7px 6px 0; border: 1px solid #303030; border-radius: 4px; }
`, `<div class="col"><character-panel></character-panel><panel-title dim class="par">Parágrafo</panel-title>
<section class="fx"><panel-title menu spread>Efeitos e predefinições</panel-title><search-field label="Procurar efeitos"></search-field></section>
<div class="note"><button aria-label="Nova pasta">${icon('note', 16)}</button></div>
<panel-title dim class="aud">Áudio</panel-title>
<section class="mt"><panel-title menu spread>Motion Tools 2.1.2 (2)</panel-title><div class="box"><div class="in"><strong>MOTION<br>TOOLS v. 2.0</strong><button class="about">ABOUT</button></div><div class="next"></div></div></section></div><div class="bar"></div>`);

/* ---------- timeline: layer outline ---------- */
const LAYERS = [
  { n: 1, name: 'Nulo 3', type: 'solid', tag: '#666', parent: 'Nenhum', fx: 1, bar: [1006, 1646, 'g'], props: [['Posição', ['960,0', '540,0'], 0, [1169, 1210]], ['Escala', ['100,0', '100,0'], 1, [1169, 1210]]] },
  { n: 2, name: 'Nulo 2', type: 'solid', tag: '#666', parent: '1. Nulo 3', fx: 1, bar: [1008, 1646, 'g'], props: [['Posição', ['658,0', '308,0'], 0, [1075, 1113, 1148, 1185]]] },
  { n: 3, name: 'Atual.png', type: 'png', tag: '#00fdff', parent: '2. Nulo 2', bar: [1013, 1888, 'c'], props: [['Escala', ['100,0', '100,0'], 1, [1149, 1186]]] },
  { n: 4, name: '1963.png', type: 'png', tag: '#00fdff', parent: '2. Nulo 2', bar: [1011, 1197, 'c'], props: [['Escala', ['115,0', '115,0'], 1, [1113, 1148]]] },
  { n: 5, name: '1889.png', type: 'png', tag: '#00fdff', parent: '2. Nulo 2', bar: [1009, 1197, 'c'], props: [['Escala', ['125,0', '125,0'], 1, [1113, 1148]]] },
];
define('layer-outline', `
  :host { overflow: hidden; }
  table { width: 993px; table-layout: fixed; border-collapse: separate; border-spacing: 0; }
  th, td { padding: 0; font-weight: 400; text-align: left; white-space: nowrap; overflow: hidden; border-bottom: 1px solid #131313; }
  th { height: 24px; font-size: 11px; color: #b4b4b4; border-top: 1px solid #0c0c0c; }
  .c { display: flex; align-items: center; height: 21px; }
  th .c { height: 22px; }
  th + th .c { box-shadow: inset 2px 0 #141414; }
  th.ns .c { box-shadow: none; }
  .layer td { background: #4a4a4a; }
  .prop td { background: #1e1e1e; height: 21px; }
  .prop .c { height: 20px; }
  .k { display: grid; place-items: center; width: 16px; height: 17px; background: #131313; border-radius: 3px; flex: none; color: #c8c8c8; }
  .k.none { background: none; }
  th .k { color: #b4b4b4; }
  .av { padding-left: 5px; } .av .k + .k { margin-left: 22px; } .av .k + .k + .k { margin-left: 3px; }
  .sw { padding-left: 6px; gap: 3px; }
  .tag { width: 15px; height: 15px; margin-left: 3px; }
  .name { flex: 1; align-self: stretch; margin-left: 3px; padding-left: 3px; background: #b2b2b2; color: #1a1a1a; line-height: 20px; }
  .prop .nav { padding-left: 10px; gap: 9px; color: #b4b4b4; }
  .prop .nav svg:first-child { color: #707070; }
  b { font-weight: 400; color: #4a9df6; }
  .spiral { color: #a0a0a0; }
  .fx { font: italic 17px/16px "Liberation Serif", serif; }
`, () => {
  const k = (i, w, cls = '') => `<span class="k ${cls}">${i ? icon(i, w) : ''}</span>`;
  const head = `<tr>
<th><div class="c" style="padding-left:7px;gap:5px">${icon('eye', 14, 12)}${icon('sound', 16, 14)}${icon('dot', 10)}${icon('locked', 12, 14).replace('<svg', '<svg style="margin-left:3px"')}</div></th>
<th><div class="c" style="padding-left:15px">${icon('tag', 16, 14)}</div></th>
<th><div class="c" style="padding-left:7px">#</div></th>
<th><div class="c" style="padding-left:6px">Nome da origem</div></th>
<th><div class="c sw">${['shy', 'sun', 'dashes'].map(n => k(n, 15, 'none')).join('')}<span class="k none fx">fx</span>${['frames', 'blur', 'half', 'cube'].map(n => k(n, 15, 'none')).join('')}</div></th>
<th><div class="c" style="padding-left:7px">Modo</div></th><th class="ns"><div class="c" style="padding-left:7px">T</div></th>
<th class="ns"><div class="c" style="padding-left:4px"><span style="width:106px">Fosco de controle</span>${icon('matte1', 15)}<span style="width:4px"></span>${icon('matte2', 15)}</div></th>
<th><div class="c" style="padding-left:7px">Transformar em principal ...</div></th></tr>`;
  const layer = l => `<tr class="layer">
<td><div class="c av">${k('eye', 14)}${k('')}${k('')}</div></td>
<td><div class="c" style="padding-left:5px;color:#c4c4c4">${icon('chevron', 12, 8)}<span class="tag" style="background:${l.tag}"></span></div></td>
<td><div class="c" style="padding-left:8px;color:#c4c4c4">${l.n}</div></td>
<td><div class="c" style="padding-left:3px">${icon(l.type, 17)}<span class="name">${l.name}</span></div></td>
<td><div class="c sw">${k('shy', 15)}${l.fx ? k('') : k('', 0, 'none')}${k('slash', 14)}${k('', 0, 'none')}${k('', 0, 'none')}${k('')}${k('')}${k('')}</div></td>
<td><div class="c"><ui-select row style="margin-left:4px;width:86px" label="Modo" value="Normal"></ui-select></div></td>
<td><div class="c" style="padding-left:2px">${k('')}</div></td>
<td><div class="c spiral" style="padding-left:2px;gap:2px">${icon('spiralM', 16)}<ui-select row style="width:86px;color:#bcbcbc" label="Fosco de controle" value="Sem fosco"></ui-select></div></td>
<td><div class="c spiral" style="padding-left:6px;gap:7px">${icon('spiral', 16)}<ui-select row style="width:112px;color:#c0c0c0" label="Principal" value="${l.parent}"></ui-select></div></td></tr>`;
  const prop = p => `<tr class="prop"><td><div class="c nav">${icon('prev', 8, 10)}${icon('key', 11)}${icon('next', 8, 10)}</div></td><td></td>
<td><div class="c" style="padding-left:12px;color:#555"><span style="width:13px">·</span><span class="k">${icon('watch', 16)}</span></div></td>
<td><div class="c" style="padding-left:8px;gap:9px">${icon('curve', 15, 13)}${p[0]}</div></td>
<td><div class="c" style="padding-left:6px;color:#c0c0c0">${p[2] ? icon('link', 16, 10) + '<span style="width:6px"></span>' : ''}<span><b>${p[1][0]}</b>,<b>${p[1][1]}</b>${p[2] ? '%' : ''}</span></div></td>
<td></td><td></td><td></td><td><div class="c spiral" style="padding-left:23px">${icon('spiral', 16)}</div></td></tr>`;
  return `<table><colgroup>${[86, 38, 42, 223, 175, 94, 24, 146, 165].map(w => `<col style="width:${w}px">`).join('')}</colgroup>
<thead>${head}</thead><tbody>${LAYERS.map(l => layer(l) + l.props.map(prop).join('')).join('')}</tbody></table>`;
});

/* ---------- timeline: time graph ---------- */
const at = x => `margin-left:${((x - 997) / 9).toFixed(3)}%`;
const span = (a, b) => `${at(a)};width:${((b - a) / 9).toFixed(3)}%`;
define('time-graph', `
  :host { display: grid; grid-template-columns: 1fr 21px; min-width: 0; position: relative; }
  .col { min-width: 0; position: relative; }
  .lane { display: grid; align-items: center; justify-items: start; position: relative; }
  .lane > * { grid-area: 1 / 1; }
  .nav { height: 11px; margin-top: 6px; }
  .nav .g, .work .g { height: 100%; background: #6a6868; }
  .end { height: 100%; width: 8px; background: #3c93f4; border-radius: 8px 0 0 8px; }
  .end.r { border-radius: 0 8px 8px 0; }
  .ruler { height: 25px; font-size: 12px; line-height: 16px; color: #b4b4b4; }
  .ruler span { width: 40px; height: 25px; display: grid; justify-items: center; align-content: end; translate: -20px 0; }
  .ruler span::after { content: ""; width: 1px; height: 6px; background: #b4b4b4; margin-top: 1px; }
  .work { height: 19px; border-top: 1px solid #101010; }
  .work .end { width: 7px; }
  .cache { height: 5px; border-bottom: 1px solid #101010; }
  .cache i { height: 4px; background: #1ec024; }
  .layer { height: 22px; background: #4a4a4a; border-bottom: 1px solid #111; }
  .prop { height: 21px; background: linear-gradient(90deg, #1e1e1e 9px, #262626 0 calc(100% - 9px), #1e1e1e 0); border-bottom: 1px solid #111; }
  .g2 { height: 20px; background: #676767; border-top: 1px solid #858585; border-left: 1px solid #999; }
  .c2 { height: 20px; background: linear-gradient(#1fe2e8, #1cc8ce); border-top: 1px solid #a0f7f9; border-left: 1px solid #a0f7f9; border-bottom: 1px solid #1a9da2; }
  .prop svg { translate: -6px 0; }
  .head { position: absolute; top: 24px; bottom: 0; left: 2.78%; translate: -8px 0; width: 14px; display: flex; flex-direction: column; align-items: center; }
  .head::after { content: ""; flex: 1; width: 1px; background: #9a9a9a; }
  .cursor { position: absolute; top: 9px; left: 3.4%; }
  .strip { padding-top: 44px; display: flex; flex-direction: column; gap: 5px; color: #b4b4b4; }
  .strip svg { margin-left: 3px; }
  .scroll { height: 162px; background: #4a4a4a; }
`, () => {
  const kf = (x, i, a) => `<svg width="12" height="12" viewBox="0 0 12 12" style="${at(x + 0.5)}"><path fill="${i === 0 ? '#6f6f6f' : '#bcbcbc'}" d="M0 0h6v12H0v-1.500C3 9.500 3.800 7.500 3.800 6S3 2.500 0 1.500z"/><path fill="${i === a.length - 1 ? '#6f6f6f' : '#bcbcbc'}" d="M12 0H6v12h6v-1.500C9 9.500 8.200 7.500 8.200 6S9 2.500 12 1.500z"/></svg>`;
  return `<div class="col">
<div class="lane nav"><div class="end" style="${at(997)}"></div><div class="g" style="${span(1006, 1888)}"></div><div class="g" style="${span(1021, 1024)};background:#6d9cd0"></div><div class="end r" style="${at(1889)}"></div></div>
<div class="lane ruler">${['08s', '13s', '18s', '23s', '28s', '33s', '38s'].map((t, i) => `<span style="${at(1006 + i * 145.85)}">${t}</span>`).join('')}</div>
<div class="lane work"><div class="end" style="${at(998)}"></div><div class="g" style="${span(1006, 1888)}"></div><div class="end r" style="${at(1890)}"></div></div>
<div class="lane cache">${[[1006, 1013], [1016, 1018], [1020, 1023], [1033, 1036], [1048, 1054], [1057, 1059], [1061, 1063], [1209, 1888]].map(r => `<i style="${span(...r)}"></i>`).join('')}</div>
${LAYERS.map(l => `<div class="lane layer"><div class="${l.bar[2]}2" style="${span(l.bar[0], l.bar[1])}"></div></div>` + l.props.map(p => `<div class="lane prop">${p[3].map(kf).join('')}</div>`).join('')).join('')}
<div class="head"><svg width="14" height="17" viewBox="0 0 14 17"><path fill="#3c93f4" d="M0 0h14v8l-7 9-7-9z"/><path stroke="#12365f" d="M3 8h8M7 8v9"/></svg></div>
<svg class="cursor" width="12" height="19" viewBox="0 0 12 19"><path fill="#fff" stroke="#222" stroke-width=".8" d="M.5.500v15.500l3.600-3.300 2.300 5.500 2.400-1-2.300-5.400h5z"/></svg>
</div><div class="strip">${icon('bin', 15, 18)}${icon('compBtn', 18)}<div class="scroll"></div></div>`;
});

define('time-line', `
  :host { display: flex; flex-direction: column; margin: 0 1px; background: #1e1e1e; border: 1px solid #3d7fd2; border-width: 1px 1px 0; border-left-color: #56657a; min-height: 0; overflow: hidden; }
  .tabs { display: flex; align-items: center; height: 30px; padding: 0 0 2px 31px; }
  .tabs comp-tab:nth-child(2) { margin-left: 71px; }
  .tabs comp-tab:nth-child(3) { margin-left: 52px; }
  .body { display: grid; grid-template-columns: 995px 1fr; flex: 1; min-height: 0; }
  .left { display: flex; flex-direction: column; min-height: 0; }
  layer-outline { border-right: 2px solid #0a0a0a; width: 995px; }
  .top { display: flex; align-items: center; gap: 12px; height: 42px; padding: 0 15px 2px 13px; color: #b0b0b0; }
  .tc { width: 97px; text-align: center; color: #4a9df6; white-space: nowrap; font-size: 12px; line-height: 14px; }
  .tc strong { display: block; font-size: 18px; line-height: 22px; }
  .tc span { color: #1f69b8; }
  search-field { width: 700px; }
  .ic { display: flex; gap: 10px; align-items: center; margin-left: 3px; }
`, `<div class="tabs"><comp-tab>Heineken</comp-tab><comp-tab>Video</comp-tab><comp-tab active>CErvejas</comp-tab></div>
<div class="body"><div class="left"><div class="top"><div class="tc"><strong>0:00:08:14</strong><span>00206 (24.00 fps)</span></div><search-field label="Procurar camadas"></search-field>
<div class="ic">${['flow', 'shyBig', 'frames', 'blur', 'graph'].map(n => `<button aria-label="${n}">${icon(n, n === 'flow' ? 22 : 20, 20)}</button>`).join('')}</div></div>
<layer-outline></layer-outline></div><time-graph></time-graph></div>`);

/* ---------- page ---------- */
define('app-shell', `
  :host { display: grid; grid-template-rows: auto auto minmax(0, 1fr) 327px; height: 100vh; background: #000; }
  main { display: grid; grid-template-columns: 132px minmax(0, 1fr) 269px; grid-template-rows: minmax(0, 1fr); gap: 6px; padding: 0 1px; margin-bottom: 6px; min-height: 0; }
  .left { display: flex; flex-direction: column; gap: 5px; min-width: 0; min-height: 0; }
`, `<menu-bar></menu-bar><tool-bar></tool-bar>
<main><div class="left"><anchor-panel></anchor-panel><align-panel></align-panel></div><comp-panel></comp-panel><right-column></right-column></main>
<time-line></time-line>`);
</script>
</body>
</html>
